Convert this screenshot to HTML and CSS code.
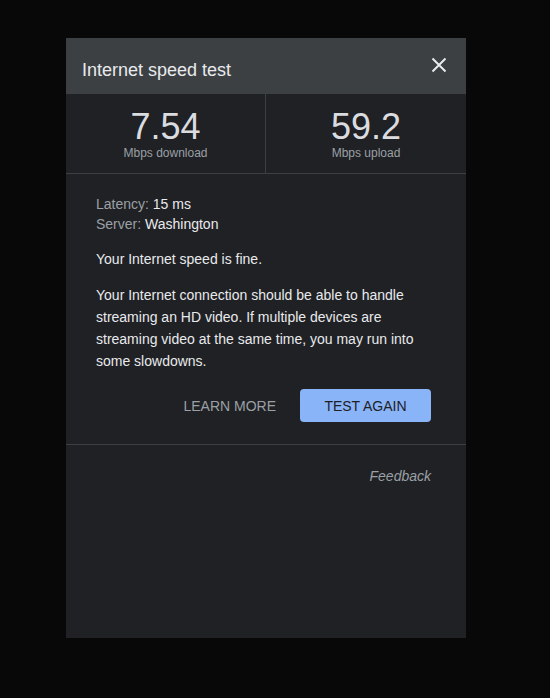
FILE: index.html
```html
<!DOCTYPE html>
<html lang="en">
<head>
  <meta charset="UTF-8" />
  <meta name="viewport" content="width=device-width, initial-scale=1.0" />
  <title>Internet speed test</title>
  <link rel="stylesheet" href="styles.css">
</head>
<body>
  <div class="panel">
    <header class="panel-head">
      <h1>Internet speed test</h1>
      <button class="close" aria-label="Close">
        <svg width="16" height="16" viewBox="0 0 16 16">
          <path d="M1.5 1.5 L14.5 14.5 M14.5 1.5 L1.5 14.5" stroke="#e8eaed" stroke-width="2" fill="none"/>
        </svg>
      </button>
    </header>

    <div class="stats">
      <div class="stat">
        <div class="value">7.54</div>
        <div class="unit">Mbps download</div>
      </div>
      <div class="stat">
        <div class="value">59.2</div>
        <div class="unit">Mbps upload</div>
      </div>
    </div>

    <section class="details">
      <div class="meta">
        <div><span class="label">Latency:</span> 15 ms</div>
        <div><span class="label">Server:</span> Washington</div>
      </div>
      <p class="verdict">Your Internet speed is fine.</p>
      <p class="explain">Your Internet connection should be able to handle streaming an HD video. If multiple devices are streaming video at the same time, you may run into some slowdowns.</p>
      <div class="actions">
        <button class="link-btn">Learn more</button>
        <button class="main-btn">Test again</button>
      </div>
    </section>

    <footer class="panel-foot">
      <a href="#" class="feedback">Feedback</a>
    </footer>
  </div>
</body>
</html>
```

FILE: styles.css
```css
body {
  margin: 0;
  background: #080808;
  font-family: 'Liberation Sans', Arial, sans-serif;
  color: #e8eaed;
}
.panel {
  width: 400px;
  height: 600px;
  margin: 38px 0 0 66px;
  background: #202124;
}
.panel-head {
  height: 56px;
  background: #3c4043;
  display: flex;
  align-items: center;
  justify-content: space-between;
  padding: 0 19px 0 16px;
}
.panel-head h1 {
  margin: 0;
  font-size: 18px;
  font-weight: normal;
  color: #e8eaed;
  padding-top: 8px;
}
.close {
  background: none;
  border: none;
  padding: 0;
  width: 16px;
  height: 16px;
  margin-top: -3px;
  cursor: pointer;
}
.close svg {
  display: block;
}
.stats {
  display: grid;
  grid-template-columns: 1fr 1fr;
  border-bottom: 1px solid #3c4043;
}
.stat {
  height: 79px;
  display: flex;
  flex-direction: column;
  align-items: center;
  padding-top: 15px;
  box-sizing: border-box;
}
.stat:first-child {
  border-right: 1px solid #3c4043;
}
.value {
  font-size: 36px;
  line-height: 36px;
  color: #dadce0;
}
.unit {
  font-size: 12px;
  line-height: 14px;
  color: #9aa0a6;
  margin-top: 1px;
}
.details {
  padding: 20px 35px 22px 30px;
  border-bottom: 1px solid #3c4043;
  font-size: 14px;
}
.meta {
  line-height: 20px;
}
.label {
  color: #9aa0a6;
}
.verdict {
  margin: 14px 0 0;
  line-height: 22px;
}
.explain {
  margin: 14px 0 0;
  line-height: 22px;
}
.actions {
  display: flex;
  justify-content: flex-end;
  align-items: center;
  gap: 8px;
  margin-top: 17px;
}
.actions button {
  font-family: inherit;
  font-size: 14px;
  text-transform: uppercase;
  border: none;
  cursor: pointer;
  height: 33px;
  border-radius: 4px;
}
.link-btn {
  background: none;
  color: #9aa0a6;
  padding: 0 16px;
}
.main-btn {
  background: #8ab4f8;
  color: #202124;
  width: 131px;
}
.panel-foot {
  display: flex;
  justify-content: flex-end;
  padding: 23px 35px 0 0;
}
.feedback {
  font-size: 14px;
  font-style: italic;
  color: #9aa0a6;
  text-decoration: none;
}
```
